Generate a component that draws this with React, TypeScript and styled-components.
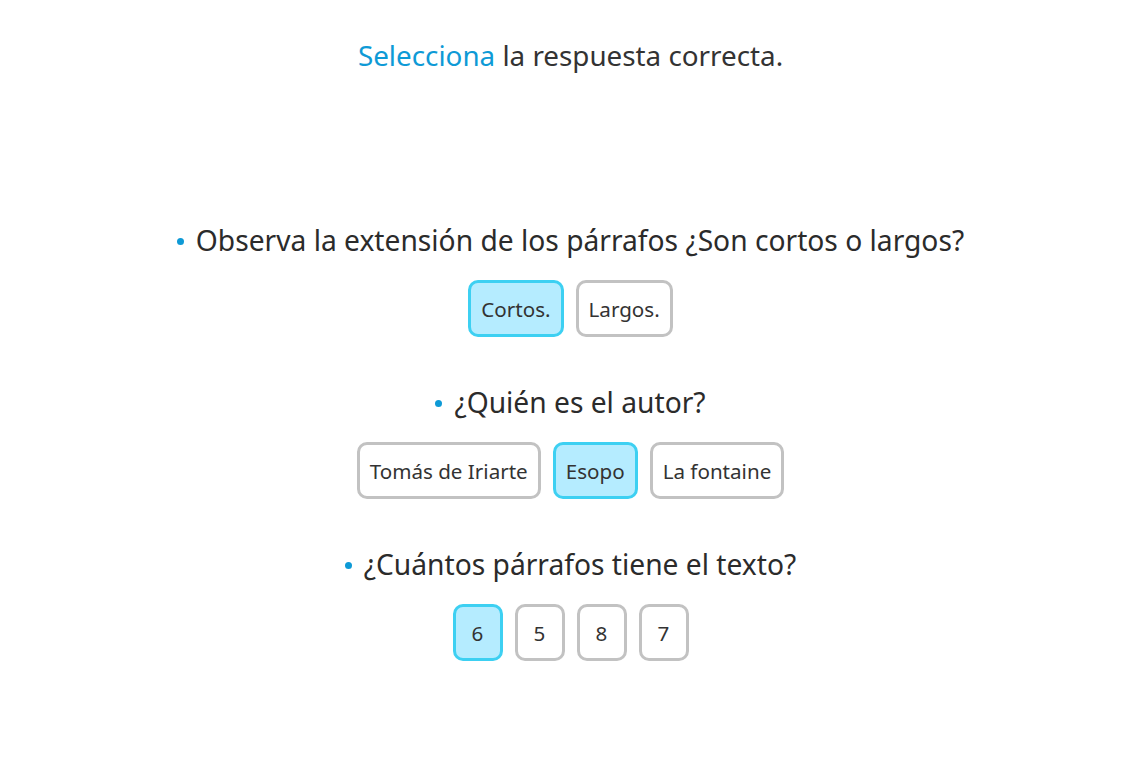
import React from 'react';
import styled, { createGlobalStyle } from 'styled-components';

const GlobalStyle = createGlobalStyle`
  body {
    margin: 0;
    background: #fff;
    font-family: 'Noto Sans', 'Open Sans', sans-serif;
    color: #333;
  }
`;

const Page = styled.div`
  display: flex;
  flex-direction: column;
  align-items: center;
  padding-top: 38px;
`;

const Title = styled.h1`
  margin: 0 0 150px;
  font-size: 27.8px;
  font-weight: 400;
  line-height: 34px;
  color: #333;
`;

const Accent = styled.span`
  color: #0e9ad6;
`;

const Question = styled.div`
  display: flex;
  flex-direction: column;
  align-items: center;
  margin-bottom: 47px;
`;

const Prompt = styled.p`
  display: flex;
  align-items: center;
  margin: 0 0 22px;
  font-size: 28.2px;
  line-height: 36px;
  color: #2b2b2b;
`;

const Bullet = styled.span`
  display: inline-block;
  width: 7px;
  height: 7px;
  border-radius: 50%;
  background: #0e9ad6;
  margin: 3px 12px 0 0;
`;

const Options = styled.div`
  display: flex;
  gap: 12px;
`;

const Option = styled.button<{ $selected?: boolean }>`
  box-sizing: border-box;
  height: 57px;
  min-width: 50px;
  padding: 0 10px;
  border: 3px solid ${(p) => (p.$selected ? '#3dd0f2' : '#c2c2c2')};
  border-radius: 10px;
  background: ${(p) => (p.$selected ? '#b5ecff' : '#fff')};
  font-family: inherit;
  font-size: 20.6px;
  color: #333;
  cursor: pointer;
`;

const questions = [
  {
    text: 'Observa la extensión de los párrafos ¿Son cortos o largos?',
    options: ['Cortos.', 'Largos.'],
    selected: 0,
  },
  {
    text: '¿Quién es el autor?',
    options: ['Tomás de Iriarte', 'Esopo', 'La fontaine'],
    selected: 1,
  },
  {
    text: '¿Cuántos párrafos tiene el texto?',
    options: ['6', '5', '8', '7'],
    selected: 0,
  },
];

const App = () => {
  return (
    <Page>
      <GlobalStyle />
      <Title>
        <Accent>Selecciona</Accent> la respuesta correcta.
      </Title>
      {questions.map((q) => (
        <Question key={q.text}>
          <Prompt>
            <Bullet />
            {q.text}
          </Prompt>
          <Options>
            {q.options.map((o, i) => (
              <Option key={o} $selected={i === q.selected}>
                {o}
              </Option>
            ))}
          </Options>
        </Question>
      ))}
    </Page>
  );
};

export default App;
